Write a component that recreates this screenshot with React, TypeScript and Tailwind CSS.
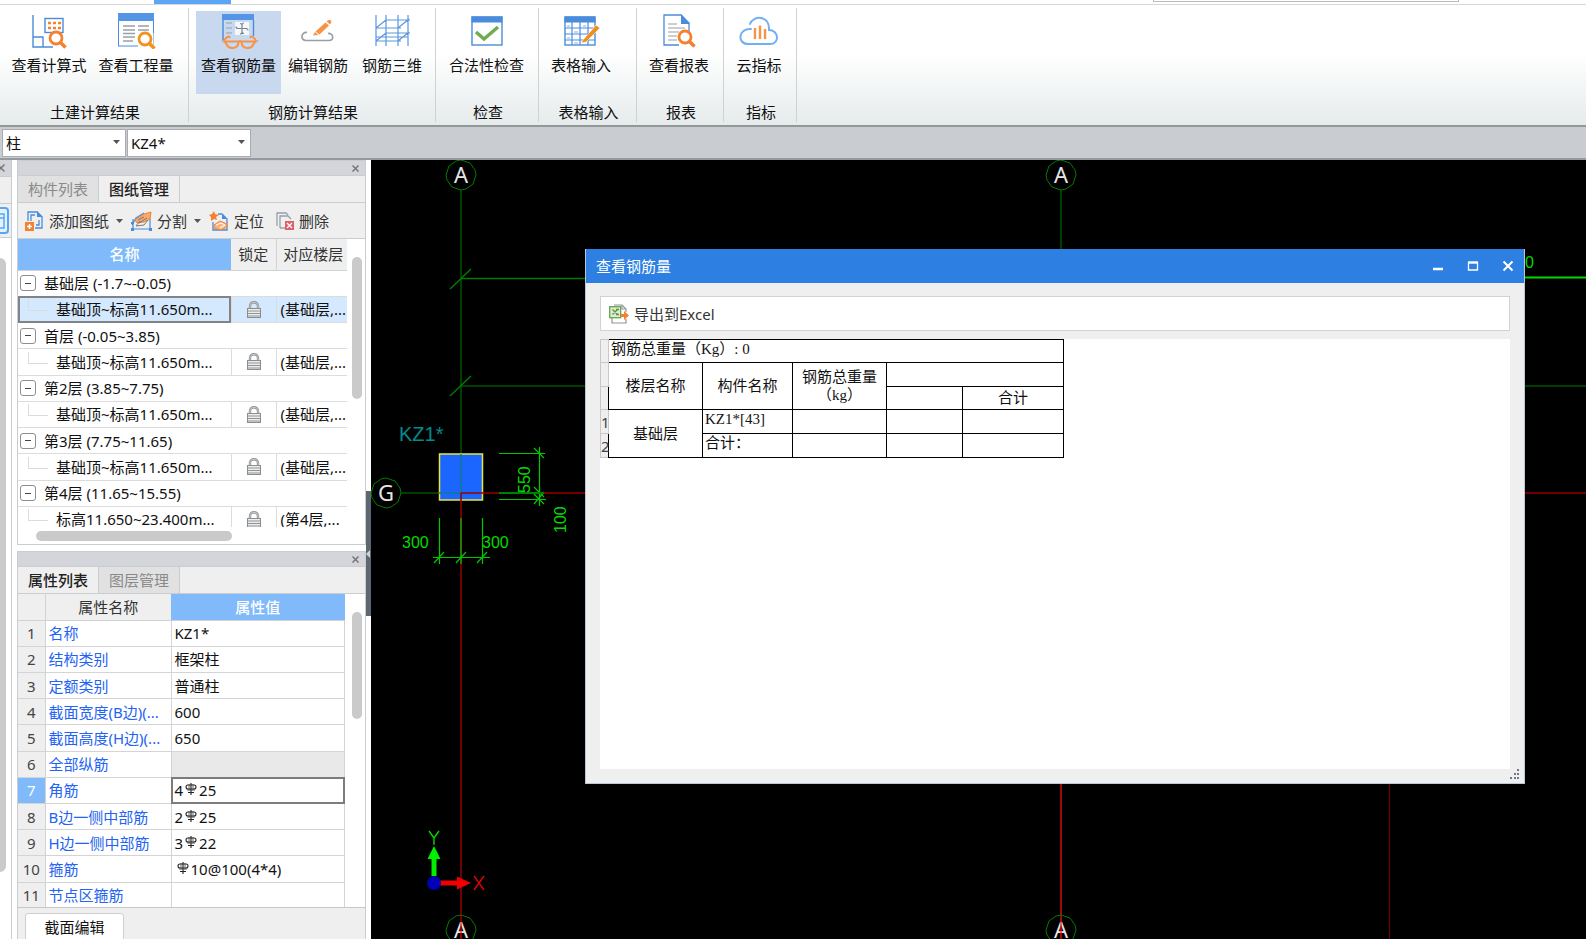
import type { ReactNode } from "react";
import clsx from "clsx";

const BLUE = "#4a8cdb";
const ORANGE = "#f5812f";
const GRAY = "#98a0a6";

function Magnifier({ x, y, color = ORANGE }: { x: number; y: number; color?: string }) {
  return (
    <g stroke={color} fill="none">
      <circle cx={x} cy={y} r="6" strokeWidth="2.8" fill="#fff" />
      <path d={`M${x + 4.5} ${y + 4.5}l5 5`} strokeWidth="3.6" />
    </g>
  );
}

function RibbonIcon({ children }: { children: ReactNode }) {
  return (
    <svg width="40" height="37" viewBox="0 0 40 37" fill="none" className="shrink-0" aria-hidden="true">
      {children}
    </svg>
  );
}

const formulaIcon = (
  <RibbonIcon>
    <path d="M4 3v32h20M4 25h10v10" stroke={BLUE} strokeWidth="1.4" />
    <rect x="16" y="6.500" width="18" height="14" stroke={BLUE} strokeWidth="1.4" />
    <path d="M19 11h3m2 0h3m2 0h3M19 16h3m2 0h3m2 0h3" stroke={ORANGE} strokeWidth="2.4" />
    <Magnifier x={27} y={26} />
  </RibbonIcon>
);

const quantityIcon = (
  <RibbonIcon>
    <rect x="2.500" y="2" width="35" height="32" fill="#fff" stroke={BLUE} />
    <rect x="2" y="1" width="36" height="8" fill="#5496e5" />
    <path d="M7 14h12M22 14h11M7 18h12M22 18h11M7 21.500h12M7 25h12M7 29h10" stroke={GRAY} strokeWidth="1.300" />
    <path d="M22 34h17V21" stroke="#fff" strokeWidth="3" />
    <Magnifier x={29} y={27} color="#f0931f" />
  </RibbonIcon>
);

const rebarQtyIcon = (
  <RibbonIcon>
    <rect x="3" y="2" width="32" height="6" fill="#5496e5" />
    <path d="M4 8v20M34.500 8v16" stroke={BLUE} strokeWidth="1.400" />
    <path d="M7 11h6M7 16h6M7 21h6" stroke={GRAY} strokeWidth="1.200" />
    <rect x="16" y="10" width="14" height="13" fill="#f4f7fc" />
    <path
      d="M23 12v9M18 16.500h10M23 13q0-2 2-2M23 20q0 2-2 2M19 16.500q-2 0-2-2M27 16.500q2 0 2 2M21 11.500q2 0 2 2M25 21.500q-2 0-2-2"
      stroke="#7d868c"
      strokeWidth="1.200"
    />
    <path
      d="M5 29.500c1-3 2-4.500 5-5l1 1.500M37 29.500c-1-3-2-4.500-5-5l-1 1.500M19 30q2-1.500 4 0"
      stroke="#f59347"
      strokeWidth="2"
    />
    <path
      d="M5 29.500h14.500c0 4-2 6.500-6 6.500-5 0-6-3-6.500-5zM37 29.500H22.500c0 4 2 6.500 6 6.500 5 0 6-3 6.500-5z"
      stroke="#f59347"
      strokeWidth="2"
    />
  </RibbonIcon>
);

const editRebarIcon = (
  <RibbonIcon>
    <path d="M9 20.500c-6-1-7 8-1 8h23c6 0 4-8-1-7" stroke={GRAY} strokeWidth="1.700" />
    <path d="M27.500 10.500l3.500 3-9.500 9-4-3z" fill="#f59347" />
    <path d="M15 23.500l2-3.500 3.500 3zM28.500 9.500l2-1.500h2l1 2-1.500 2.500z" fill="#f59347" />
  </RibbonIcon>
);

const rebar3dIcon = (
  <RibbonIcon>
    <path
      d="M4 3v31M14 3v31M26 3v31M36 3v31M4 16h25M4 29h25M14 8h24M14 21h24M4 16l10-8M26 16l11-9M4 29l10-8M26 29l11-9M4 25h32"
      stroke="#5b97e0"
      strokeWidth="1.200"
    />
  </RibbonIcon>
);

const checkIcon = (
  <RibbonIcon>
    <rect x="5" y="5" width="30" height="28" fill="#fff" stroke={BLUE} strokeWidth="1.400" />
    <rect x="4.500" y="4.500" width="31" height="6" fill={BLUE} />
    <path d="M9 20l8 7 14-12" stroke="#70ad51" strokeWidth="3.500" />
  </RibbonIcon>
);

const tableInputIcon = (
  <RibbonIcon>
    <rect x="4" y="5" width="30" height="28" fill="#fff" stroke={BLUE} strokeWidth="1.400" />
    <rect x="3.500" y="4.500" width="31" height="6" fill={BLUE} />
    <path d="M4 16h30M4 22h30M4 28h30M11 10v23M19 10v23M27 10v23" stroke={BLUE} strokeWidth="1.200" />
    <path d="M6 14h3M22 14h3M13 20h4M6 26h3M13 31h4" stroke="#7eb3ee" />
    <path d="M22 28l13-15 4 3-14 14-5 1z" fill="#ee8f1d" stroke="#fff" strokeWidth=".6" />
  </RibbonIcon>
);

const reportIcon = (
  <RibbonIcon>
    <path d="M5 3h17l8 8v22H5z" fill="#fff" stroke={BLUE} strokeWidth="1.300" />
    <path d="M22 2v10h9z" fill={BLUE} />
    <path d="M9 12h9M9 16h17M9 20h11M9 24h9M9 28h9" stroke={GRAY} strokeWidth="1.200" />
    <path d="M20 33h12V20" stroke="#fff" strokeWidth="3" />
    <Magnifier x={26} y={25} />
  </RibbonIcon>
);

const cloudIcon = (
  <RibbonIcon>
    <path
      d="M12 17c-13-1-14 15-3 15h22c10 0 9-14-1-14C31 3 14 3 11 12"
      stroke="#72b0f5"
      strokeWidth="2"
      strokeLinecap="round"
    />
    <path d="M16 16v11M21 13.500V27M26 17v10" stroke="#f59347" strokeWidth="2.400" />
  </RibbonIcon>
);

type Tool = { label: string; icon: ReactNode; width: string; active?: boolean };

const ribbon: { name: string; pad: string; tools: Tool[] }[] = [
  {
    name: "土建计算结果",
    pad: "pl-[6px] pr-[8px]",
    tools: [
      { label: "查看计算式", icon: formulaIcon, width: "w-[86px]" },
      { label: "查看工程量", icon: quantityIcon, width: "w-[88px]" },
    ],
  },
  {
    name: "钢筋计算结果",
    pad: "pl-[7px] pr-[6px]",
    tools: [
      { label: "查看钢筋量", icon: rebarQtyIcon, width: "w-[85px]", active: true },
      { label: "编辑钢筋", icon: editRebarIcon, width: "w-[74px]" },
      { label: "钢筋三维", icon: rebar3dIcon, width: "w-[74px]" },
    ],
  },
  { name: "检查", pad: "pl-[7px] pr-[8px]", tools: [{ label: "合法性检查", icon: checkIcon, width: "w-[87px]" }] },
  { name: "表格输入", pad: "pl-[5px] pr-[18px]", tools: [{ label: "表格输入", icon: tableInputIcon, width: "w-[74px]" }] },
  { name: "报表", pad: "pl-[5px] pr-[7px]", tools: [{ label: "查看报表", icon: reportIcon, width: "w-[74px]" }] },
  { name: "指标", pad: "pl-[5px] pr-[7px]", tools: [{ label: "云指标", icon: cloudIcon, width: "w-[60px]" }] },
];

const floors = [
  { name: "基础层 (-1.7~-0.05)", drawing: "基础顶~标高11.650m...", floor: "(基础层,...", selected: true },
  { name: "首层 (-0.05~3.85)", drawing: "基础顶~标高11.650m...", floor: "(基础层,..." },
  { name: "第2层 (3.85~7.75)", drawing: "基础顶~标高11.650m...", floor: "(基础层,..." },
  { name: "第3层 (7.75~11.65)", drawing: "基础顶~标高11.650m...", floor: "(基础层,..." },
  { name: "第4层 (11.65~15.55)", drawing: "标高11.650~23.400m...", floor: "(第4层,..." },
];

const properties: { name: string; before?: string; rebar?: string; disabled?: boolean }[] = [
  { name: "名称", before: "KZ1*" },
  { name: "结构类别", before: "框架柱" },
  { name: "定额类别", before: "普通柱" },
  { name: "截面宽度(B边)(...", before: "600" },
  { name: "截面高度(H边)(...", before: "650" },
  { name: "全部纵筋", disabled: true },
  { name: "角筋", before: "4", rebar: "25" },
  { name: "B边一侧中部筋", before: "2", rebar: "25" },
  { name: "H边一侧中部筋", before: "3", rebar: "22" },
  { name: "箍筋", rebar: "10@100(4*4)" },
  { name: "节点区箍筋" },
];

function Ribbon() {
  return (
    <div className="flex h-[123px] shrink-0 border-t border-b-2 border-t-[#d5d7d9] border-b-[#94979a] bg-linear-to-b from-white from-40% to-[#e6ebec]">
      {ribbon.map((group) => (
        <section key={group.name} className="flex py-[3px]">
          <div className="flex flex-col justify-between border-r border-[#cfd1d3] pt-[3px]">
            <div className={clsx("flex", group.pad)}>
              {group.tools.map((tool) => (
                <button
                  key={tool.label}
                  className={clsx(
                    "flex h-[83px] flex-col items-center pt-px whitespace-nowrap",
                    tool.width,
                    tool.active && "bg-[#c8d8ef]",
                  )}
                >
                  {tool.icon}
                  <span className="mt-[6px] leading-5">{tool.label}</span>
                </button>
              ))}
            </div>
            <h2 className="pl-[2px] text-center leading-5">{group.name}</h2>
          </div>
        </section>
      ))}
    </div>
  );
}

function Caret() {
  return (
    <svg width="8" height="5" viewBox="0 0 8 5" fill="#555" className="shrink-0" aria-hidden="true">
      <path d="M0 0h7L3.500 4z" />
    </svg>
  );
}

function Combo({ label, value }: { label: string; value: string }) {
  return (
    <div className="relative flex items-center">
      <select
        aria-label={label}
        defaultValue={value}
        className="h-[28px] w-[124px] appearance-none border border-[#a9abae] bg-white pl-[3px] leading-5 outline-none"
      >
        <option>{value}</option>
      </select>
      <span className="pointer-events-none absolute right-[5px]">
        <Caret />
      </span>
    </div>
  );
}

function CloseMark() {
  return (
    <button aria-label="关闭" className="flex w-4 items-center justify-center">
      <svg width="7" height="7" viewBox="0 0 7 7" stroke="#777" strokeWidth="1.500">
        <path d="M.5.5l6 6M6.500.5l-6 6" />
      </svg>
    </button>
  );
}

function PanelHead({ tabs, active }: { tabs: string[]; active: number }) {
  return (
    <>
      <div className="flex h-[14px] shrink-0 justify-end bg-[#d3d5da] pr-[2px]">
        <CloseMark />
      </div>
      <div className="flex h-[28px] shrink-0 border-y border-[#c9ccd0] bg-[#efefef]" role="tablist">
        {tabs.map((tab, i) => (
          <button
            key={tab}
            role="tab"
            aria-selected={i === active}
            className={clsx(
              "w-[81px] border-r border-[#c9ccd0] leading-5",
              i === active ? "font-medium text-[#222]" : "bg-[#e1e1e1] text-[#8a8a8a]",
            )}
          >
            {tab}
          </button>
        ))}
      </div>
    </>
  );
}

function DrawingTools() {
  return (
    <div className="flex h-[36px] shrink-0 items-center border-b border-[#c9ccd0] bg-[#efefef] pt-px pl-[7px] text-[#333]">
      <button className="flex items-center gap-[5px]">
        <svg width="19" height="20" viewBox="0 0 19 20" fill="none">
          <path d="M3 10V1h9l5 5v11h-7M6 10V4h4M14 9v5h-3" stroke={BLUE} strokeWidth="1.300" />
          <path d="M12 0v6h6z" fill={BLUE} />
          <path d="M0 11h9v9H0z" fill={ORANGE} />
          <path d="M2 15.500h5M4.500 13v5" stroke="#fff" strokeWidth="1.500" />
        </svg>
        添加图纸
      </button>
      <span className="px-[7px]">
        <Caret />
      </span>
      <button className="flex items-center gap-[5px]">
        <svg width="21" height="20" viewBox="0 0 21 20" fill="none">
          <path d="M2 8v10M19 7v11M0 18h21M1 14l4-7 8-5" stroke={BLUE} strokeWidth="1.200" />
          <path d="M0 17h3v3H0zM18 17h3v3h-3zM0 11h3v2H0z" fill={BLUE} />
          <path d="M4 9l9-6 7-2-1 7-6 3-7 1z" fill="#f7ab70" stroke={ORANGE} />
          <path d="M7 9l6-3M8 12l8-5M5 15l8-1 4-5M5 15l4-5" stroke="#75797c" />
        </svg>
        分割
      </button>
      <span className="px-[7px]">
        <Caret />
      </span>
      <button className="flex items-center gap-[5px]">
        <svg width="20" height="20" viewBox="0 0 20 20" fill="none">
          <path d="M9 3h4l5 5v11H4v-8" stroke={BLUE} strokeWidth="1.300" />
          <path d="M13 3v5h5z" fill={BLUE} />
          <path d="M5 0l1 3 4 1-3 2 1 3-3-1-3 2V6L0 4l3-1z" fill={ORANGE} />
          <path d="M5 14l6-4 7 3v3l-6 3-7-2z" fill="#f9b47f" stroke={ORANGE} />
          <path d="M7 14l5-2 4 2-5 3" stroke="#fff" />
        </svg>
        定位
      </button>
      <button className="ml-3 flex items-center gap-[5px]">
        <svg width="18" height="19" viewBox="0 0 18 19" fill="none">
          <path d="M1 14V1h9l2 2M4 16V4h8l3 3M4 16h5" stroke={GRAY} strokeWidth="1.300" />
          <rect x="9" y="9" width="9" height="9" fill="#d9616a" />
          <path d="M11 11l5 5m0-5l-5 5" stroke="#fff" strokeWidth="1.200" />
        </svg>
        删除
      </button>
    </div>
  );
}

function LockIcon() {
  return (
    <svg width="14" height="17" viewBox="0 0 14 17" fill="none" className="mx-auto block" aria-label="锁定">
      <path d="M3 8V5c0-5 8-5 8 0v3" stroke="#8a8d90" strokeWidth="2.400" />
      <path d="M3 8V5c0-5 8-5 8 0v3" stroke="#e8eaec" strokeWidth=".7" />
      <rect x=".5" y="7.500" width="13" height="9" fill="#eceded" stroke="#8a8d90" />
      <path d="M1 10h12M1 12.500h12M1 15h12" stroke="#909396" />
    </svg>
  );
}

function DrawingPanel() {
  return (
    <section className="flex h-[385px] shrink-0 flex-col border border-[#c9ccd0] bg-white">
      <PanelHead tabs={["构件列表", "图纸管理"]} active={1} />
      <DrawingTools />
      <div className="flex min-h-0 flex-1">
        <div className="flex-1">
          <div className="h-[288px] overflow-hidden">
            <table className="h-[294px] w-full table-fixed border-collapse leading-5 whitespace-nowrap">
              <colgroup>
                <col />
                <col className="w-[45px]" />
                <col className="w-[71px]" />
              </colgroup>
              <thead>
                <tr className="h-[31px] border-b border-[#d0d2d4] bg-[#efefef] text-[#333]">
                  <th className="bg-[#80bafa] font-medium text-white">名称</th>
                  <th className="border-r border-[#d0d2d4] font-normal">锁定</th>
                  <th className="pl-[3px] font-normal">对应楼层</th>
                </tr>
              </thead>
              {floors.map((item) => (
                <tbody key={item.name}>
                  <tr className="border-b border-[#dcdcdc]">
                    <td colSpan={3}>
                      <div className="flex items-center gap-2 pl-[2px]">
                        <button
                          aria-label="折叠"
                          className="flex h-4 w-4 items-center justify-center rounded-[3px] border border-[#8e8e8e] bg-white"
                        >
                          <span className="h-px w-[6px] bg-[#444]" />
                        </button>
                        {item.name}
                      </div>
                    </td>
                  </tr>
                  <tr className={clsx("border-b border-[#dcdcdc]", item.selected && "bg-[#d5e9fe]")}>
                    <td
                      className={clsx(
                        "border-r border-[#dcdcdc]",
                        item.selected && "outline-2 -outline-offset-2 outline-[#808488]",
                      )}
                    >
                      <div className="flex">
                        <span className="mb-2 ml-[10px] w-[20px] border-b border-l border-[#dcdcdc]" />
                        <span className="pl-2">{item.drawing}</span>
                      </div>
                    </td>
                    <td className="border-r border-[#dcdcdc]">
                      <LockIcon />
                    </td>
                    <td className="pl-1">{item.floor}</td>
                  </tr>
                </tbody>
              ))}
            </table>
          </div>
          <div className="mt-[4px] ml-[18px] h-[10px] w-[196px] rounded-full bg-[#cacaca]" />
        </div>
        <div className="w-[18px] pt-[18px] pl-[5px]">
          <div className="h-[142px] w-[10px] rounded-full bg-[#cacaca]" />
        </div>
      </div>
    </section>
  );
}

function RebarMark() {
  return (
    <svg width="12" height="12" viewBox="0 0 12 12" fill="none" className="mx-[2px] mb-[6px] inline-block" aria-hidden="true">
      <path d="M6 0v12M3 9.500h6M3 2h6q2 0 2 2t-2 2H3q-2 0-2-2t2-2z" stroke="#222" strokeWidth="1.100" />
      <path d="M4 1v6.500M8 1v6.500M2 7h8" stroke="#444" strokeWidth=".8" />
    </svg>
  );
}

function PropertyPanel() {
  return (
    <section className="flex min-h-0 flex-1 flex-col border border-b-0 border-[#c9ccd0] bg-white">
      <PanelHead tabs={["属性列表", "图层管理"]} active={0} />
      <div className="flex min-h-0 flex-1 overflow-hidden border-b border-[#c4c6c8]">
        <div className="flex-1">
          <table className="h-[315px] w-full table-fixed border-collapse leading-5 whitespace-nowrap">
            <colgroup>
              <col className="w-[27px]" />
              <col className="w-[126px]" />
              <col />
            </colgroup>
            <thead>
              <tr className="h-[26px] border-b border-[#d0d2d4] bg-[#efefef] text-[#333]">
                <th className="border-r border-[#d0d2d4]" />
                <th className="font-normal">属性名称</th>
                <th className="bg-[#80bafa] font-medium text-white">属性值</th>
              </tr>
            </thead>
            <tbody>
              {properties.map((item, i) => (
                <tr key={item.name} className="border-b border-[#d4d4d4]">
                  <th
                    className={clsx(
                      "border-r border-[#d0d2d4] font-normal",
                      i === 6 ? "bg-[#80bafa] text-white" : "bg-[#efefef] text-[#444]",
                    )}
                  >
                    {i + 1}
                  </th>
                  <td className="border-r border-[#d4d4d4] pl-[3px] text-[#2363f3]">{item.name}</td>
                  <td
                    className={clsx(
                      "border-r border-[#d4d4d4] pl-[3px]",
                      item.disabled && "bg-[#e9e9e9]",
                      i === 6 && "outline-2 -outline-offset-2 outline-[#7c7c7c]",
                    )}
                  >
                    <div className="h-5">
                      {item.before}
                      {item.rebar && <RebarMark />}
                      {item.rebar}
                    </div>
                  </td>
                </tr>
              ))}
            </tbody>
          </table>
        </div>
        <div className="w-[20px] pt-[18px] pl-[7px]">
          <div className="h-[107px] w-[10px] rounded-full bg-[#cacaca]" />
        </div>
      </div>
      <div className="h-[31px] shrink-0 overflow-hidden bg-[#efefef] pt-[5px] pl-[7px]">
        <button className="h-[28px] w-[99px] rounded-[3px] border border-[#cfcfcf] bg-white leading-5">截面编辑</button>
      </div>
    </section>
  );
}

function Bubble({ x, y, label }: { x: number; y: number; label: string }) {
  return (
    <g>
      <path
        transform={`translate(${x} ${y})`}
        d="M0-15l9 3 5 7 1 5-3 9-7 5-5 1-9-3-5-7-1-5 3-9 7-5z"
        stroke="#007a00"
      />
      <text x={x} y={y + 8} fill="#e6e6e6" textAnchor="middle" fontSize="22">
        {label}
      </text>
    </g>
  );
}

function Drawing() {
  return (
    <svg className="h-full w-full" fill="none" fontFamily='"Noto Sans", "Noto Sans CJK SC", sans-serif'>
      <g transform="translate(-371 -160)">
        <g stroke="#005200" strokeWidth="1.500">
          <path d="M461 190v303M1061 190v100M401 493h60M461 386h1125" />
          <path d="M450 289l21-20M450 396l21-20" stroke="#007a00" />
          <path d="M461 278.500h200" stroke="#007a00" />
          <path d="M1500 277.500h86" stroke="#00d800" strokeWidth="2" />
        </g>
        <rect x="439.500" y="454" width="43" height="46" fill="#1a66ff" stroke="#e8e83c" strokeWidth="1.500" />
        <path d="M461 454v39h-22" stroke="#13788c" strokeWidth="1.500" />
        <path d="M461 493h1125M461 493v446" stroke="#960000" strokeWidth="1.500" />
        <path d="M1061 780v159" stroke="#d01010" strokeWidth="1.500" />
        <path d="M1389.500 780v159" stroke="#6a0000" strokeWidth="1.200" />

        <g stroke="#00c800" strokeWidth="1.200">
          <path d="M499 453.500h46M499 499.500h47M539.500 447v59M534 448l10 10M534 487l10 10M534 494l10 10M534 504l10-12" />
          <path d="M439.500 518v46M461 518v46M482.500 518v46M433 557.500h57M434 563l10-11M456 563l10-11M477 563l10-11" />
          <path d="M499 493h45" stroke="#008000" strokeWidth="2" />
        </g>
        <g fill="#00dc00" fontFamily='"Liberation Sans", sans-serif' fontSize="16">
          <text x="402" y="548">300</text>
          <text x="482" y="548">300</text>
          <text transform="translate(530 493) rotate(-90)">550</text>
          <text transform="translate(566 533) rotate(-90)">100</text>
          <text x="1525" y="268">0</text>
          <text x="399" y="441" fill="#008c8c" fontSize="20">
            KZ1*
          </text>
        </g>

        <Bubble x={461} y={175} label="A" />
        <Bubble x={1061} y={175} label="A" />
        <Bubble x={386} y={493} label="G" />
        <Bubble x={461} y={930} label="A" />
        <Bubble x={1061} y={930} label="A" />
        <path d="M461 922v17M1061 922v17" stroke="#c00000" />

        <path d="M431.500 876v-17h-4l6.500-13 6.500 13h-4v17z" fill="#00f000" />
        <path d="M440 880.500h17v-4l14 6.500-14 6.500v-4h-17z" fill="#f00000" />
        <circle cx="434" cy="883" r="7" fill="#0000b4" />
        <path d="M429 831l5 7 5-7M434 838v7" stroke="#00d800" strokeWidth="1.400" />
        <path d="M474 876l10 14M484 876l-10 14" stroke="#e00000" strokeWidth="1.400" />
      </g>
    </svg>
  );
}

function QuantityTable() {
  return (
    <table className="w-[463px] table-fixed border-collapse font-['Liberation_Serif','Noto_Sans_CJK_SC',serif] leading-[18px] [&_td]:border [&_td]:border-black [&_td]:p-0 [&_th]:border [&_th]:border-[#c8c8c8] [&_th]:bg-[#efefef] [&_th]:p-0 [&_th]:font-['Noto_Sans',sans-serif] [&_th]:font-normal [&_th]:text-[#444]">
      <colgroup>
        <col className="w-[8px]" />
        <col className="w-[94px]" />
        <col className="w-[90px]" />
        <col className="w-[94px]" />
        <col className="w-[76px]" />
        <col className="w-[101px]" />
      </colgroup>
      <tbody>
        <tr className="h-[23px]">
          <th />
          <td colSpan={5} className="align-top">
            <span className="pl-[2px]">钢筋总重量（Kg）: 0</span>
          </td>
        </tr>
        <tr className="h-[24px] text-center">
          <th />
          <td rowSpan={2}>楼层名称</td>
          <td rowSpan={2}>构件名称</td>
          <td rowSpan={2}>
            钢筋总重量
            <br />
            （kg）
          </td>
          <td colSpan={2} />
        </tr>
        <tr className="h-[23px] text-center">
          <th />
          <td />
          <td>合计</td>
        </tr>
        <tr className="h-[24px]">
          <th>1</th>
          <td rowSpan={2} className="text-center">
            基础层
          </td>
          <td className="align-top">
            <span className="pl-[2px]">KZ1*[43]</span>
          </td>
          <td />
          <td />
          <td />
        </tr>
        <tr className="h-[24px]">
          <th>2</th>
          <td className="align-top">
            <span className="pl-[2px]">合计：</span>
          </td>
          <td />
          <td />
          <td />
        </tr>
      </tbody>
    </table>
  );
}

function QuantityDialog() {
  return (
    <div
      role="dialog"
      aria-label="查看钢筋量"
      className="absolute top-[89px] right-[61px] left-[214px] flex h-[535px] flex-col border border-t-0 border-[#b9c6da] bg-[#efefef]"
    >
      <header className="flex h-[34px] shrink-0 items-center justify-between bg-[#2d80e2] pr-[10px] pl-[10px] text-white">
        <h1 className="leading-5">查看钢筋量</h1>
        <div className="flex gap-[23px]">
          <button aria-label="最小化">
            <svg width="12" height="12" viewBox="0 0 12 12">
              <path d="M1 9h10" stroke="#fff" strokeWidth="2.500" />
            </svg>
          </button>
          <button aria-label="最大化">
            <svg width="12" height="12" viewBox="0 0 12 12" fill="none">
              <path d="M1.500 2v8h9V2" stroke="#fff" strokeWidth="1.300" />
              <path d="M1 2.500h10" stroke="#fff" strokeWidth="2.400" />
            </svg>
          </button>
          <button aria-label="关闭">
            <svg width="12" height="12" viewBox="0 0 12 12">
              <path d="M1.500 1.500l9 9M10.500 1.500l-9 9" stroke="#fff" strokeWidth="2" />
            </svg>
          </button>
        </div>
      </header>
      <div className="flex min-h-0 flex-1 flex-col gap-[8px] px-[14px] pt-[13px] pb-[14px]">
        <div className="flex h-[35px] shrink-0 items-center border border-[#d0d3d6] bg-white pl-2">
          <button className="flex items-center gap-[5px] leading-5 text-[#333]">
            <svg width="20" height="20" viewBox="0 0 20 20" fill="none">
              <path d="M3 14v5h14v-4M5 1h8l4 4v3" stroke="#8d969c" strokeWidth="1.200" />
              <path d="M13 1v4h4" stroke="#8d969c" />
              <rect x=".7" y="2.700" width="11" height="11" fill="#dcecd2" stroke="#69a24c" strokeWidth="1.300" />
              <path d="M3.500 5.500l5 5M8.500 5.500l-5 5M7 5.500h3M7 10.500h3" stroke="#589440" strokeWidth="1.300" />
              <path d="M12 10h3V7l5 4.500-5 4.500v-3h-3z" fill="#f5812f" />
            </svg>
            导出到Excel
          </button>
        </div>
        <div className="min-h-0 flex-1 bg-white">
          <QuantityTable />
        </div>
      </div>
      <svg width="10" height="10" viewBox="0 0 10 10" fill="#727984" className="absolute right-[4px] bottom-[4px]">
        <path d="M7 0h2v2H7zM4 4h2v2H4zM7 4h2v2H7zM0 8h2v2H0zM4 8h2v2H4zM7 8h2v2H7z" />
      </svg>
    </div>
  );
}

export default function App() {
  return (
    <div className="flex h-screen flex-col overflow-hidden bg-white font-['Noto_Sans','Noto_Sans_CJK_SC',sans-serif] text-[15px] text-[#111]">
      <div className="flex h-1 shrink-0 justify-between">
        <div className="ml-[154px] w-[77px] bg-[#5ba6f5]" />
        <div className="mr-[127px] h-[2px] w-[306px] border-x border-b border-[#b9bbbd]" />
      </div>
      <Ribbon />
      <div className="flex h-[33px] shrink-0 items-center gap-px border-b-2 border-[#96999d] bg-[#c9ccd1] pl-[2px]">
        <Combo label="构件类型" value="柱" />
        <Combo label="构件名称" value="KZ4*" />
      </div>
      <div className="flex min-h-0 flex-1">
        <aside className="flex w-[12px] shrink-0 flex-col overflow-hidden border-r border-[#c9ccd0]">
          <div className="flex h-[16px] shrink-0 bg-[#d3d5da] pt-1">
            <svg width="5" height="8" viewBox="3 0 5 8" stroke="#777" strokeWidth="1.500">
              <path d="M.5.5l7 7M7.500.5l-7 7" />
            </svg>
          </div>
          <div className="h-[28px] shrink-0 border-y border-[#c9ccd0] bg-[#efefef]" />
          <div className="h-[34px] shrink-0 border-b border-[#c9ccd0] bg-[#efefef] pt-[3px]">
            <button aria-label="列表" className="flex h-[27px] w-[9px] items-center rounded-r-[4px] border-2 border-l-0 border-[#58a4f7] bg-[#e4f1ff]">
              <svg width="5" height="16" viewBox="0 0 5 16" fill="none" stroke="#58a4f7">
                <path d="M0 1h4v14H0M0 5h4" strokeWidth="1.500" />
              </svg>
            </button>
          </div>
          <div className="mt-[20px] mb-[67px] w-[6px] flex-1 rounded-r-full bg-[#cacaca]" />
        </aside>
        <div className="ml-[5px] flex w-[349px] shrink-0 flex-col gap-[6px]">
          <DrawingPanel />
          <PropertyPanel />
        </div>
        <div className="flex w-[5px] shrink-0 flex-col pt-[331px]">
          <button aria-label="收起面板" className="flex h-[125px] items-center bg-[#5d6771]">
            <svg width="5" height="8" viewBox="0 0 5 8" fill="#cfd3d6">
              <path d="M4 0v8L0 4z" />
            </svg>
          </button>
        </div>
        <main className="relative min-w-0 flex-1 overflow-hidden bg-black">
          <Drawing />
          <QuantityDialog />
        </main>
      </div>
    </div>
  );
}
